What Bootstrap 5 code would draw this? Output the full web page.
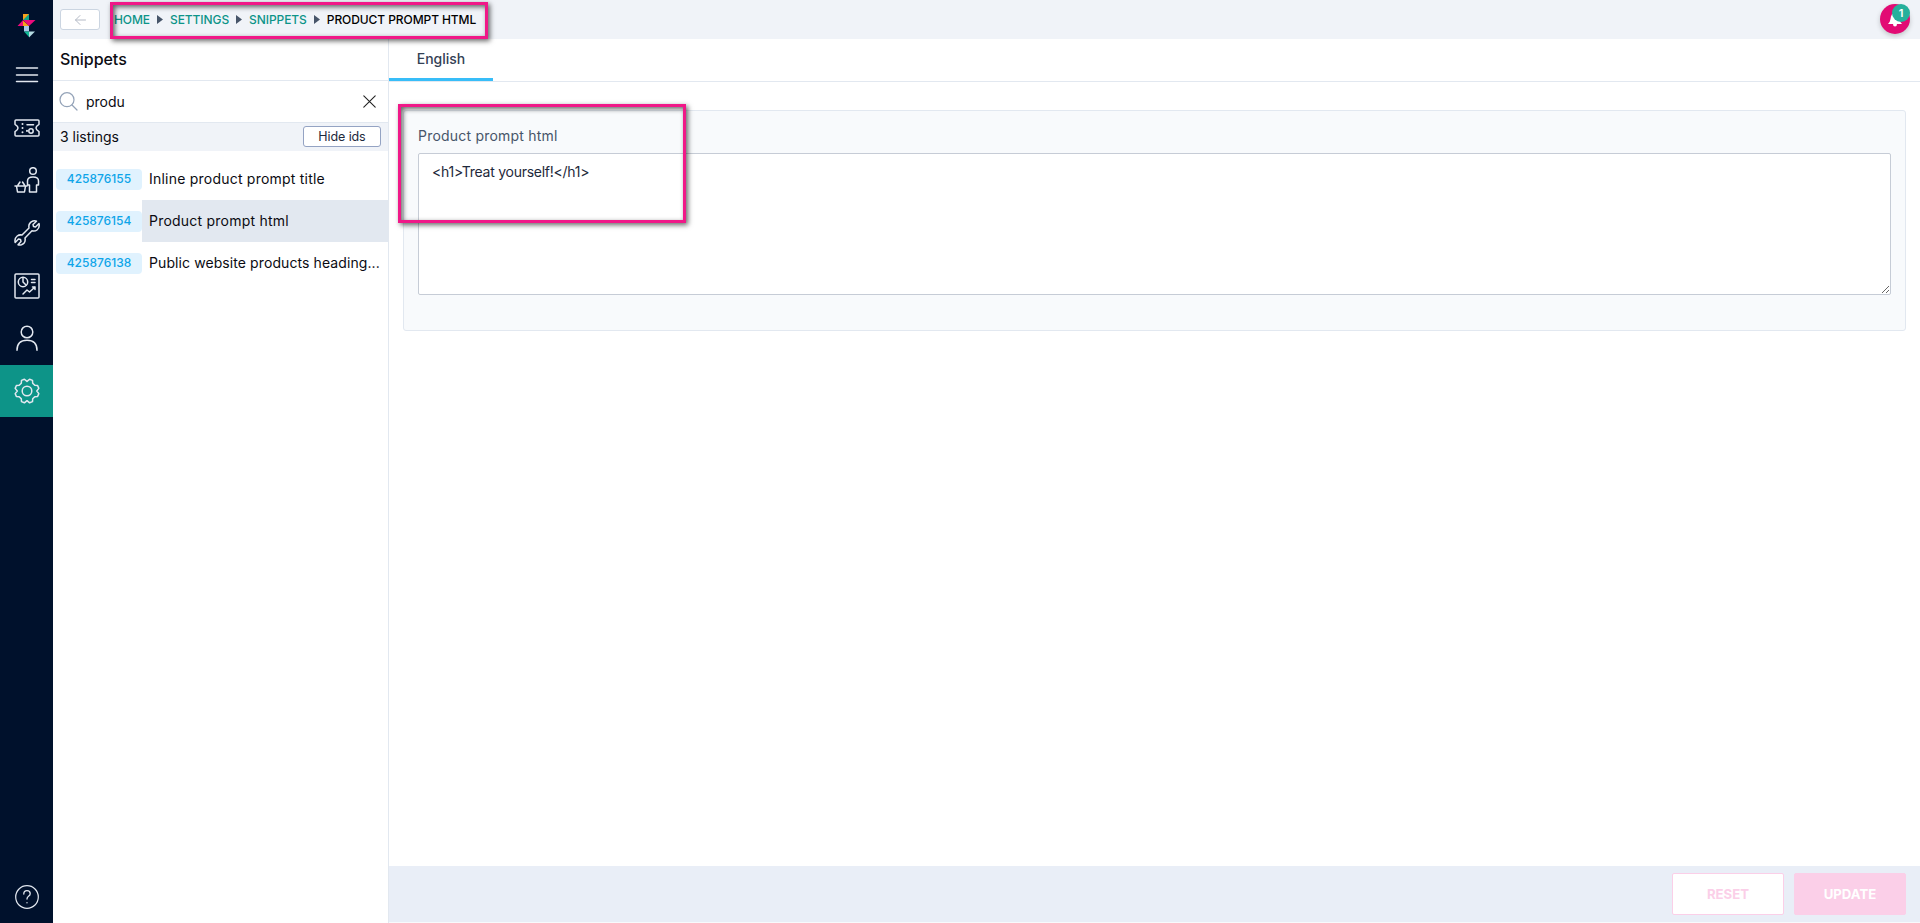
<!DOCTYPE html>
<html lang="en">
<head>
<meta charset="utf-8">
<meta name="viewport" content="width=device-width, initial-scale=1">
<title>Snippets</title>
<link href="https://cdn.jsdelivr.net/npm/bootstrap@5.3.0/dist/css/bootstrap.min.css" rel="stylesheet">
<style>
body{font-family:Inter,"Liberation Sans",sans-serif;font-size:14px;line-height:20px;color:#0b0b12;background:#fff;overflow:hidden}
svg{display:block;fill:none;stroke-linecap:round;stroke-linejoin:round}
.rail{width:53px;background:#00112c}
.rail a{height:52.6px;color:#e2e8f0}
.rail .logo{height:49px}
.rail a svg{stroke:currentColor;stroke-width:1.5}
.rail .logo svg{stroke:none}
.rail .on{background:#0d9488}
.topbar{height:39px;background:#f0f3f8}
.back{width:40px;height:21px;border:1px solid #cbd5e1;border-radius:3px;background:#fff;margin-left:7px;padding:0}
.trail{font-size:12px;font-weight:500;margin-left:14px;color:#000;letter-spacing:-.08px;gap:7px}
.trail a{color:#0d9488;text-decoration:none}
.trail svg{fill:#475569;width:6px;height:9px}
.bell{width:30px;height:30px;background:#e20b74;margin:4px 10px 0 0;box-shadow:0 2px 5px #0003}
.bell .count{right:0;top:0;width:18px;height:18px;background:#26b09c;color:#fff;font-size:11px;line-height:18px;font-weight:600}
.listing{width:336px;border-right:1px solid #e2e8f0}
.listing h1{font-size:16px;font-weight:500;line-height:20px;height:42px;padding:10px 7px;margin:0;border-bottom:1px solid #e2e8f0;letter-spacing:-.05px}
.finder{height:42px;border-bottom:1px solid #e2e8f0;padding:0 12px 0 6px}
.tally{height:28px;background:#f0f3f8;padding:0 7px;margin-bottom:7px}
.hide{width:78px;height:21px;border:1px solid #94a3c3;border-radius:3px;background:#fff;font-size:12.5px;line-height:19px;color:#1e293b;padding:0;margin-bottom:1px;letter-spacing:-.1px}
.entry{height:42px;padding-left:3px}
.idtag{width:86px;height:21px;border-radius:4px;background:#e0f2fe;color:#0ea5e9;font-size:12px;font-weight:500;line-height:20px}
.name{line-height:42px;padding-left:7px;letter-spacing:.22px}
.entry.sel .name{background:#e2e8f0}
.entry .long{letter-spacing:.09px}
.tabs{height:43px;border-bottom:1px solid #e2e8f0}
.tabs a{width:104px;height:42px;border-bottom:3px solid #38bdf8;color:#334155;text-decoration:none;font-weight:500;padding:10px 0 0}
.panel{margin:28px 14px 0 14px;height:221px;background:#f8fafc;border:1px solid #e2e8f0;border-radius:3px;padding:15px 14px 0}
.panel label{line-height:20px;margin-bottom:7px;color:#475569;letter-spacing:.21px}
.panel textarea{display:block;width:100%;height:142px;border:1px solid #c6ccd6;border-radius:2px;padding:8px 14px 8px 13px;color:#1e293b;outline:0;resize:vertical;letter-spacing:-.26px}
.actions{height:57px;background:#e9eef7;border-bottom:1px solid #f8fafc;padding:0 14px;gap:10px}
.actions button{width:112px;height:42px;border:1px solid #fbcfe8;border-radius:2px;font-weight:700;font-size:13.2px;color:#fbcfe8;background:#fff;padding:0}
.actions .upd{background:#fbcfe8;color:#fff}
.mark-box{border:3px solid #f01888;box-shadow:2px 2px 5px #0009,inset 2px 2px 5px #0009;pointer-events:none}
.mb1{left:110px;top:2px;width:378px;height:37px}
.mb2{left:398px;top:104px;width:288px;height:119px}
</style>
</head>
<body class="vh-100 d-flex position-relative">
<nav class="rail d-flex flex-column flex-shrink-0">
<a class="logo d-flex align-items-center justify-content-center" href="#"><svg width="30" height="30" viewBox="0 0 30 30"><path d="M11 4h6v6h-6z" fill="#f9a11b"/><path d="M17 4v6h-6z" fill="#10a58a"/><path d="M5.500 16L11 10v6zM11 10h12.500L17 16z" fill="#ec0a7c"/><path d="M11 10.500l6 5.500h-6z" fill="#f9a11b"/><path d="M12 16h5v5.500h-5z" fill="#a9c7e8"/><path d="M12 21.500h5V27z" fill="#10b996"/><path d="M17 21.500h6L17 27.500z" fill="#b3dbe3"/></svg></a>
<a class="d-flex align-items-center justify-content-center" href="#"><svg width="24" height="16" viewBox="0 0 24 16"><path d="M1.500 1h21M1.500 8h21M1.500 14.500h21"/></svg></a>
<a class="d-flex align-items-center justify-content-center" href="#"><svg width="26" height="18" viewBox="0 0 26 18"><path d="M2 1h22q1 0 1 1v3.300q-6 3.700 0 7.400V16q0 1-1 1H2q-1 0-1-1v-3.300q6-3.700 0-7.400V2q0-1 1-1z"/><path d="M8.500 5v.1M8.500 9v.1M8.500 13.200v.1M13 11.800v.1" stroke-width="2"/><path d="M13 5.800h6.500"/><circle cx="17" cy="12" r="2.200"/></svg></a>
<a class="d-flex align-items-center justify-content-center" href="#"><svg width="26" height="26" viewBox="0 0 26 26"><circle cx="19" cy="4" r="3.300"/><path d="M15.500 25v-7h-2v-4q0-4 5.500-4t5.500 4v4h-2v7zM1 19h12M2.500 19l1 6h7l1-6M4 18l2-3M10.500 18l-2-3"/></svg></a>
<a class="d-flex align-items-center justify-content-center" href="#"><svg width="26" height="26" viewBox="0 0 26 26"><path d="M8 15L15 8q-1-5 4-7 2-.5 3.500.2L19 4.500l.5 2 2 .5L25 3.500q1 4-2 6.500-2 1.500-5 .8L11 18q1 5-3.500 6.700-2 .7-3.500 0L7 21.500l-.5-2-2-.5L1.200 22.500q-1-4 2-6.500 2-1.500 4.800-1z"/></svg></a>
<a class="d-flex align-items-center justify-content-center" href="#"><svg width="26" height="26" viewBox="0 0 26 26"><rect x="1" y="1" width="24" height="24" rx="1"/><circle cx="9" cy="9" r="4.700"/><path d="M9 4.500V9l3 3M17.500 6.500H21M17.500 9.500H21M9 21l4-4 2.500 2 5.500-5M18.500 14H21v2.500"/></svg></a>
<a class="d-flex align-items-center justify-content-center" href="#"><svg width="26" height="26" viewBox="0 0 26 26"><circle cx="13" cy="7" r="5.800"/><path d="M3 25.200q0-10 10-10t10 10"/></svg></a>
<a class="on d-flex align-items-center justify-content-center" href="#"><svg width="26" height="26" viewBox="0 0 26 26"><circle cx="13" cy="13" r="4.800"/><path d="M13 3.400L15.600 1.200 18.500 2.400 18.700 5.200 20.800 7.300 23.600 7.500 24.800 10.400 22.800 13 24.800 15.600 23.600 18.500 20.800 18.700 18.700 20.800 18.500 23.600 15.600 24.800 13 22.700 10.400 24.800 7.500 23.600 7.300 20.800 5.200 18.700 2.400 18.500 1.200 15.600 3.300 13 1.200 10.400 2.400 7.500 5.200 7.300 7.300 5.200 7.500 2.400 10.400 1.200z"/></svg></a>
<a class="d-flex align-items-center justify-content-center mt-auto" href="#"><svg width="26" height="26" viewBox="0 0 26 26"><circle cx="13" cy="13" r="11.300" stroke-width="1.200"/><path d="M9.800 10q0-3.300 3.200-3.300t3.200 3q0 1.500-1.700 2.600-1.500 1-1.500 2.700M13 18.600v.2" stroke-width="1.300"/></svg></a>
</nav>
<div class="flex-grow-1 d-flex flex-column">
<header class="topbar d-flex align-items-center flex-shrink-0">
<button class="back d-flex align-items-center justify-content-center"><svg width="11" height="10" viewBox="0 0 11 10" stroke="#b4bac6"><path d="M.5 5h10M5 .5L.5 5 5 9.500"/></svg></button>
<div class="trail d-flex align-items-center"><a href="#">HOME</a><svg viewBox="0 0 6 9"><path d="M0 0l6 4.500L0 9z"/></svg><a href="#">SETTINGS</a><svg viewBox="0 0 6 9"><path d="M0 0l6 4.500L0 9z"/></svg><a href="#">SNIPPETS</a><svg viewBox="0 0 6 9"><path d="M0 0l6 4.500L0 9z"/></svg><span>PRODUCT PROMPT HTML</span></div>
<div class="bell rounded-circle ms-auto position-relative mb-auto"><svg width="30" height="30" viewBox="0 0 30 30"><path d="M8 20q2-1.500 2.500-5 .5-6 4.500-6t4.500 6q.5 3.500 2.500 5zM13 20h4q0 2.500-2 2.500T13 20z" fill="#fff"/></svg><span class="count position-absolute rounded-circle text-center">1</span></div>
</header>
<div class="flex-grow-1 d-flex">
<aside class="listing flex-shrink-0">
<h1>Snippets</h1>
<div class="finder d-flex align-items-center"><svg width="19" height="19" viewBox="0 0 19 19" stroke="#94a3b8" stroke-width="1.200"><circle cx="8" cy="7.700" r="7"/><path d="M13 13l5 5"/></svg><span class="ps-1 ms-1">produ</span><svg class="ms-auto" width="13" height="13" viewBox="0 0 13 13" stroke="#222" stroke-width="1.100"><path d="M.8.800l11.400 11.400M12.200.800L.8 12.200"/></svg></div>
<div class="tally d-flex align-items-center justify-content-between"><span>3 listings</span><button class="hide">Hide ids</button></div>
<div class="entry d-flex align-items-center"><div class="idtag text-center flex-shrink-0">425876155</div><div class="name flex-grow-1">Inline product prompt title</div></div>
<div class="entry sel d-flex align-items-center"><div class="idtag text-center flex-shrink-0">425876154</div><div class="name flex-grow-1">Product prompt html</div></div>
<div class="entry d-flex align-items-center"><div class="idtag text-center flex-shrink-0">425876138</div><div class="name long flex-grow-1">Public website products heading...</div></div>
</aside>
<main class="flex-grow-1 d-flex flex-column">
<div class="tabs"><a class="d-block text-center" href="#">English</a></div>
<div class="panel"><label for="snippet">Product prompt html</label><textarea id="snippet">&lt;h1&gt;Treat yourself!&lt;/h1&gt;</textarea></div>
<div class="actions mt-auto d-flex align-items-center justify-content-end"><button>RESET</button><button class="upd">UPDATE</button></div>
</main>
</div>
</div>
<div class="mark-box mb1 position-absolute"></div>
<div class="mark-box mb2 position-absolute"></div>
<script src="https://cdn.jsdelivr.net/npm/bootstrap@5.3.0/dist/js/bootstrap.bundle.min.js"></script>
</body>
</html>
